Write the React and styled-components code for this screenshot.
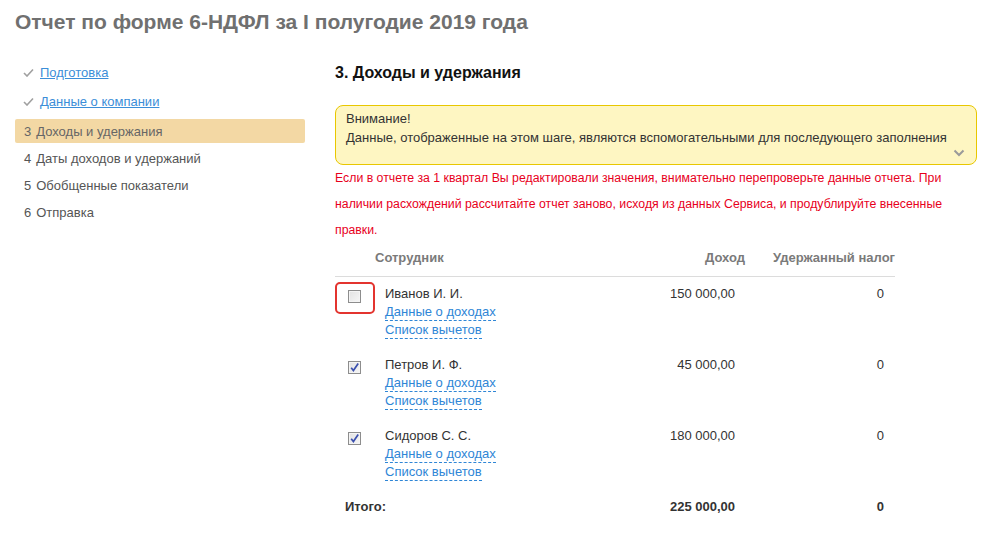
import React from "react";
import styled, { createGlobalStyle } from "styled-components";

const Global = createGlobalStyle`
  html, body { margin: 0; padding: 0; background: #fff; }
  body { font-family: "Liberation Sans", Arial, sans-serif; color: #333; }
`;

const Page = styled.div`
  padding: 10px 13px 0 15px;
`;

const Title = styled.h1`
  margin: 0;
  font-size: 21px;
  line-height: 24px;
  font-weight: bold;
  color: #707070;
`;

const Columns = styled.div`
  display: flex;
  gap: 30px;
  margin-top: 24px;
`;

const Sidebar = styled.nav`
  width: 290px;
  flex: none;
  display: flex;
  flex-direction: column;
`;

const DoneItem = styled.div`
  height: 29px;
  display: flex;
  align-items: center;
  padding-left: 8px;
  gap: 6px;
  font-size: 13px;
`;

const SideLink = styled.a`
  color: #3b8ed8;
  text-decoration: underline;
  cursor: pointer;
`;

const StepItem = styled.div`
  height: 24px;
  margin-top: 3px;
  display: flex;
  align-items: center;
  padding-left: 9px;
  font-size: 13px;
  color: ${(p) => (p.$active ? "#666" : "#555")};
  background: ${(p) => (p.$active ? "#f3d8a4" : "transparent")};
  border-radius: 2px;
`;

const StepNum = styled.span`
  margin-right: 5px;
`;

const Main = styled.main`
  flex: 1;
  min-width: 0;
  padding-top: 6px;
`;

const Heading = styled.h2`
  margin: 0;
  font-size: 16px;
  line-height: 18px;
  font-weight: bold;
  color: #111;
`;

const Notice = styled.div`
  position: relative;
  margin-top: 23px;
  background: #fef6c2;
  border: 1px solid #e8c700;
  border-radius: 8px;
  padding: 3px 10px 17px 10px;
  font-size: 13px;
  line-height: 19px;
  color: #333;
`;

const Chevron = styled.svg`
  position: absolute;
  right: 11px;
  bottom: 7px;
`;

const Warning = styled.p`
  margin: 0;
  font-size: 12.3px;
  line-height: 26px;
  color: #e8001c;
`;

const Table = styled.div`
  width: 560px;
`;

const Row = styled.div`
  display: grid;
  grid-template-columns: 40px 250px 120px 150px;
  padding: ${(p) => p.$pad || "8px 0 9px"};
  border-bottom: ${(p) => (p.$head ? "1px solid #dcdcdc" : "none")};
  font-size: 13px;
  line-height: 18px;
`;

const HeadCell = styled.div`
  font-weight: bold;
  color: #7a7a7a;
  text-align: ${(p) => p.$align || "left"};
  white-space: nowrap;
`;

const CheckCell = styled.div`
  position: relative;
  height: 18px;
`;

const Highlight = styled.div`
  position: absolute;
  left: 0;
  top: -3px;
  width: 40px;
  height: 32px;
  box-sizing: border-box;
  border: 2.5px solid #e3342f;
  border-radius: 5px;
`;

const Box = styled.span`
  position: absolute;
  left: 13px;
  top: 5px;
  width: 13px;
  height: 13px;
  box-sizing: border-box;
  border: 1px solid #8d8d8d;
  background: linear-gradient(135deg, #e2e2e2 0%, #f6f6f6 100%);
  box-shadow: inset 0 0 0 1px #f4f4f4;
  display: flex;
  align-items: center;
  justify-content: center;
`;

const NameCell = styled.div`
  padding-left: 10px;
  display: flex;
  flex-direction: column;
  align-items: flex-start;
  color: #333;
`;

const DashLink = styled.a`
  color: #2f86d6;
  text-decoration: none;
  border-bottom: 1px dashed #2f86d6;
  line-height: 17px;
  cursor: pointer;
`;

const NumCell = styled.div`
  text-align: right;
  padding-right: ${(p) => p.$pr || "10px"};
  color: #333;
  font-weight: ${(p) => (p.$bold ? "bold" : "normal")};
`;

const TotalLabel = styled.div`
  grid-column: 1 / span 2;
  padding-left: 10px;
  font-weight: bold;
  color: #333;
`;

const CheckMark = () => (
  <svg width="11" height="9" viewBox="0 0 11 9">
    <path d="M1 5 L4 8 L10 1.5" fill="none" stroke="#a0a0a0" strokeWidth="1.6" />
  </svg>
);

const Checkbox = ({ checked }) => (
  <Box>
    {checked && (
      <svg width="11" height="11" viewBox="0 0 11 11">
        <path d="M2.2 5.8 L4.4 8.6 L9.2 1.6" fill="none" stroke="#3a4fae" strokeWidth="1.7" />
      </svg>
    )}
  </Box>
);

const people = [
  { name: "Иванов И. И.", income: "150 000,00", tax: "0", checked: false, mark: true },
  { name: "Петров И. Ф.", income: "45 000,00", tax: "0", checked: true },
  { name: "Сидоров С. С.", income: "180 000,00", tax: "0", checked: true },
];

export default function App() {
  return (
    <>
      <Global />
      <Page>
        <Title>Отчет по форме 6-НДФЛ за I полугодие 2019 года</Title>
        <Columns>
          <Sidebar>
            <DoneItem>
              <CheckMark />
              <SideLink>Подготовка</SideLink>
            </DoneItem>
            <DoneItem>
              <CheckMark />
              <SideLink>Данные о компании</SideLink>
            </DoneItem>
            <StepItem $active>
              <StepNum>3</StepNum>Доходы и удержания
            </StepItem>
            <StepItem>
              <StepNum>4</StepNum>Даты доходов и удержаний
            </StepItem>
            <StepItem>
              <StepNum>5</StepNum>Обобщенные показатели
            </StepItem>
            <StepItem>
              <StepNum>6</StepNum>Отправка
            </StepItem>
          </Sidebar>
          <Main>
            <Heading>3. Доходы и удержания</Heading>
            <Notice>
              <div>Внимание!</div>
              <div>
                Данные, отображенные на этом шаге, являются вспомогательными для последующего заполнения
              </div>
              <Chevron width="12" height="8" viewBox="0 0 12 8">
                <path d="M1.5 1.5 L6 6 L10.5 1.5" fill="none" stroke="#9a9a9a" strokeWidth="2" />
              </Chevron>
            </Notice>
            <Warning>
              Если в отчете за 1 квартал Вы редактировали значения, внимательно перепроверьте данные отчета. При
              наличии расхождений рассчитайте отчет заново, исходя из данных Сервиса, и продублируйте внесенные
              правки.
            </Warning>
            <Table>
              <Row $head $pad="6px 0 9px">
                <div />
                <HeadCell>Сотрудник</HeadCell>
                <HeadCell $align="right">Доход</HeadCell>
                <HeadCell $align="right">Удержанный налог</HeadCell>
              </Row>
              {people.map((p) => (
                <Row key={p.name}>
                  <CheckCell>
                    {p.mark && <Highlight />}
                    <Checkbox checked={p.checked} />
                  </CheckCell>
                  <NameCell>
                    <span>{p.name}</span>
                    <DashLink>Данные о доходах</DashLink>
                    <DashLink>Список вычетов</DashLink>
                  </NameCell>
                  <NumCell>{p.income}</NumCell>
                  <NumCell $pr="11px">{p.tax}</NumCell>
                </Row>
              ))}
              <Row>
                <TotalLabel>Итого:</TotalLabel>
                <NumCell $bold>225 000,00</NumCell>
                <NumCell $bold $pr="11px">0</NumCell>
              </Row>
            </Table>
          </Main>
        </Columns>
      </Page>
    </>
  );
}
